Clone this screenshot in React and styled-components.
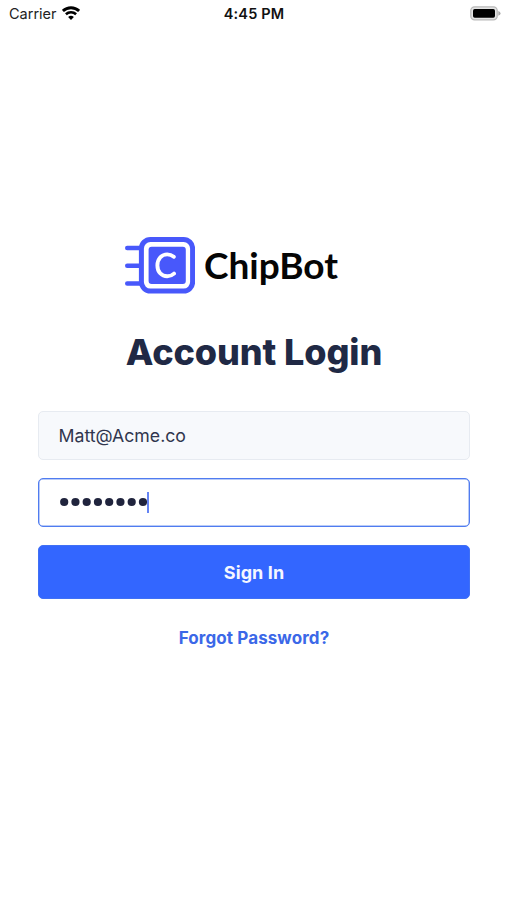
import React from "react";
import styled, { createGlobalStyle } from "styled-components";

const GlobalStyle = createGlobalStyle`
  *, *::before, *::after { box-sizing: border-box; }
  body { margin: 0; background: #fff; font-family: Inter, "Liberation Sans", sans-serif; }
`;

const Screen = styled.div`
  width: 507px;
  height: 900px;
  display: flex;
  flex-direction: column;
  background: #fff;
  overflow: hidden;
`;

const StatusBar = styled.header`
  display: grid;
  grid-template-columns: 1fr auto 1fr;
  align-items: center;
  height: 26px;
  padding: 0 6px 0 9px;
  color: #222;
  font-size: 14.5px;
`;

const Carrier = styled.div`
  display: flex;
  align-items: center;
  gap: 5px;
`;

const Clock = styled.time`
  margin-right: 2px;
  font-weight: 600;
  letter-spacing: 0.15px;
  color: #111;
`;

const BatteryIcon = styled.svg`
  justify-self: end;
  display: block;
`;

const Main = styled.main`
  display: flex;
  flex-direction: column;
  align-items: stretch;
  padding: 210px 37px 0 38px;
`;

const Logo = styled.div`
  display: flex;
  align-items: center;
  height: 58px;
  margin-left: 86px;
  gap: 9px;
`;

const LogoName = styled.span`
  font: 700 37px/58px Lato, sans-serif;
  color: #050505;
`;

const Title = styled.h1`
  margin: 35px 0 0;
  height: 46px;
  text-align: center;
  font-size: 36px;
  line-height: 46px;
  font-weight: 800;
  letter-spacing: -0.1px;
  color: #202945;
  white-space: nowrap;
`;

const Form = styled.div`
  display: flex;
  flex-direction: column;
  gap: 18px;
  margin-top: 36px;
`;

const Field = styled.div`
  display: flex;
  align-items: center;
  height: 49px;
  padding: 0 19.5px 1px;
  border: 1px solid ${(p) => (p.$focused ? "#507cf0" : "#e7ebf1")};
  border-radius: 5px;
  background: ${(p) => (p.$focused ? "#fff" : "#f7f9fc")};
  box-shadow: ${(p) => (p.$focused ? "inset 0 0 0 .5px #7597ef" : "none")};
  color: #30364e;
  font-size: 17.7px;
`;

const MaskDots = styled.svg`
  display: block;
`;

const Caret = styled.i`
  width: 2px;
  height: 21px;
  background: #6584f4;
`;

const Button = styled.button`
  height: 54px;
  padding: 0;
  border: 1px solid #4070f5;
  border-radius: 5px;
  background: #3366ff;
  color: #f5f7ff;
  font: 650 18px Inter, sans-serif;
  letter-spacing: 0.1px;
`;

const Forgot = styled.a`
  align-self: center;
  margin-top: 27px;
  color: #3b68e8;
  font-size: 17px;
  line-height: 24px;
  font-weight: 650;
  letter-spacing: 0.1px;
  white-space: nowrap;
`;

function Wifi() {
  return (
    <svg width="18" height="15" viewBox="0 0 18 15" fill="none" stroke="#000">
      <path d="M.9 4.9a11.8 11.8 0 0 1 16.2 0" strokeWidth="2.9" />
      <path d="M3.9 8.3a7.5 7.5 0 0 1 10.2 0" strokeWidth="2.6" />
      <path d="M9 14 6.1 11.1a4.2 4.2 0 0 1 5.8 0Z" fill="#000" stroke="none" />
    </svg>
  );
}

function Battery() {
  return (
    <BatteryIcon width="31" height="15" viewBox="0 0 31 15">
      <rect x=".8" y=".8" width="26.4" height="13" rx="3.8" fill="#e4e4e4" stroke="#b9b9b9" strokeWidth="1.3" />
      <rect x="3" y="3" width="22" height="8.7" rx="1.7" fill="#000" />
      <path d="M28.3 5.1q2.3 1 2.3 2.3t-2.3 2.3Z" fill="#aaa" />
    </BatteryIcon>
  );
}

function Chip() {
  return (
    <svg width="71" height="58" viewBox="0 0 71 58">
      <g fill="none" stroke="#4858fb" strokeLinecap="round">
        <path d="M3.2 12H16M3.2 29.7H16M3.2 47.5H16" strokeWidth="4.4" />
        <rect x="17.4" y="3.5" width="51.2" height="51.6" rx="9" strokeWidth="5" />
      </g>
      <rect x="24.6" y="10.7" width="37.2" height="37.2" rx="3" fill="#4858fb" />
      <path d="M49.8 20.8C47.8 19.2 45.6 18.4 43.2 18.4C37.5 18.4 33.4 23.1 33.4 29.4C33.4 35.8 37.5 40.3 43.2 40.3C45.8 40.3 48 39.4 50 37.6" fill="none" stroke="#fff" strokeWidth="3.9" strokeLinecap="round" />
    </svg>
  );
}

function Mask({ length }) {
  return (
    <MaskDots width="88.5" height="10" viewBox="0 0 88.5 10" fill="#20243d">
      {Array.from({ length }, (_, i) => <circle key={i} cx={5.2 + i * 11.25} cy="5" r="4.1" />)}
    </MaskDots>
  );
}

export default function App() {
  return (
    <>
      <GlobalStyle />
      <Screen>
        <StatusBar>
          <Carrier>Carrier<Wifi /></Carrier>
          <Clock>4:45 PM</Clock>
          <Battery />
        </StatusBar>
        <Main>
          <Logo><Chip /><LogoName>ChipBot</LogoName></Logo>
          <Title>Account Login</Title>
          <Form>
            <Field>Matt@Acme.co</Field>
            <Field $focused>
              <Mask length={8} />
              <Caret />
            </Field>
            <Button>Sign In</Button>
          </Form>
          <Forgot>Forgot Password?</Forgot>
        </Main>
      </Screen>
    </>
  );
}
